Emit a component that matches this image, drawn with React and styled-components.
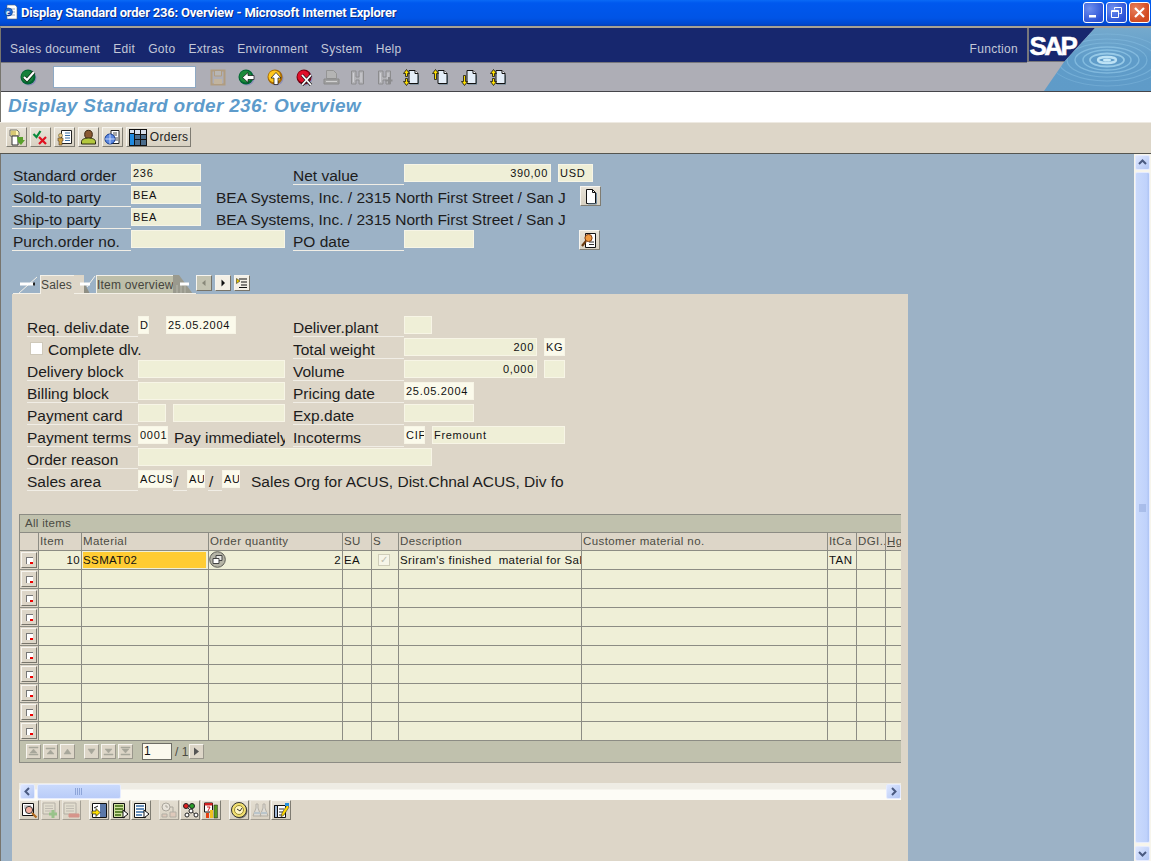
import React from "react";
import styled, { createGlobalStyle } from "styled-components";

const COLS = "19px 43px 127px 134px 29px 27px 183px 246px 29px 29px 16px";

const Global = createGlobalStyle`
  html, body { margin: 0; height: 100%; overflow: hidden; }
  body { font-family: "Liberation Sans", Arial, sans-serif; }
`;

// ---------- window chrome ----------
const Page = styled.div`
  width: 1151px;
  height: 861px;
  display: flex;
  flex-direction: column;
  position: relative;
  background: #9cb2c6;
  overflow: hidden;
`;

const TitleBar = styled.div`
  height: 26px;
  flex: none;
  display: flex;
  align-items: center;
  padding: 0 1px 2px 3px;
  box-sizing: border-box;
  background: linear-gradient(#0a6af6 0, #0058ee 3px, #0054e6 18px, #0048d0 24px, #0a3fb0 100%);
  color: #fff;
  font: bold 13px Roboto, "Liberation Sans", sans-serif;
  text-shadow: 1px 1px 0 #0a2a80;
`;

const TitleText = styled.span`
  margin-left: 2px;
  flex: 1;
  letter-spacing: -0.2px;
`;

const WinButton = styled.div`
  width: 19px;
  height: 19px;
  margin-left: 2px;
  border: 1px solid #fff;
  border-radius: 3px;
  display: flex;
  align-items: center;
  justify-content: center;
  background: ${(p) =>
    p.$close
      ? "radial-gradient(circle at 30% 30%, #e8805c, #d24a20 70%)"
      : "radial-gradient(circle at 30% 30%, #6f8fee, #2a52d6 75%)"};
`;

const Chrome = styled.div`
  flex: none;
  position: relative;
  background: #aeaeb6;
  border-top: 2px solid #a8a294;
  border-left: 1px solid #77756e;
`;

const MenuBar = styled.div`
  margin-right: 124px;
  background: #17276e;
  border-bottom: 1px solid #77777c;
  display: flex;
  align-items: center;
  gap: 13px;
  padding: 7px 9px 0;
  height: 27px;
  color: #c3c8d8;
  font-size: 12px;
  letter-spacing: 0.3px;
`;

const MenuSpacer = styled.span`
  flex: 1;
`;

const LogoBox = styled.svg`
  position: absolute;
  top: 0;
  right: 0;
  display: block;
`;

const MainTools = styled.div`
  height: 28px;
  border-bottom: 1px solid #45454a;
  display: flex;
  align-items: center;
  padding-left: 19px;
`;

const ToolIcon = styled.div`
  width: 17px;
  height: 17px;
  flex: none;
  margin-left: ${(p) => p.$ml || 0}px;
`;

const CommandField = styled.div`
  width: 141px;
  height: 20px;
  margin-left: 16px;
  background: #fff;
  border: 1px solid #8ea9c4;
  flex: none;
`;

const PageTitle = styled.div`
  flex: none;
  height: 30px;
  background: #fff;
  border-left: 1px solid #77756e;
  padding-left: 7px;
  color: #5d9bcb;
  font: italic bold 19px/28px "Liberation Sans", sans-serif;
  letter-spacing: 0.3px;
`;

const AppTools = styled.div`
  flex: none;
  height: 32px;
  box-sizing: border-box;
  background: #ddd6c8;
  border-top: 1px solid #eeeae2;
  border-bottom: 1px solid #55554f;
  display: flex;
  align-items: flex-start;
  padding: 4px 0 0 6px;
`;

const Btn = styled.div`
  width: ${(p) => p.$w || 21}px;
  height: 20px;
  margin-left: ${(p) => p.$ml || 0}px;
  flex: none;
  box-sizing: border-box;
  display: flex;
  align-items: center;
  justify-content: center;
  gap: 3px;
  background: linear-gradient(#e8e3d7, #d8d1c2);
  border: 1px solid;
  border-color: #f7f5ef #7f7c72 #7f7c72 #f7f5ef;
  font-size: 12px;
  letter-spacing: 0.3px;
  color: #222;
  opacity: ${(p) => (p.$off ? 0.6 : 1)};
`;

// ---------- body ----------
const Body = styled.div`
  flex: 1;
  display: flex;
  min-height: 0;
  border-left: 1px solid #77756e;
`;

const Content = styled.div`
  flex: 1;
  min-width: 0;
  padding: 10px 0 0 11px;
`;

const Row = styled.div`
  display: flex;
  height: 22px;
  align-items: flex-start;
  font-size: 15.5px;
  color: #111;
`;

const Label = styled.div`
  width: ${(p) => p.$w}px;
  height: 21px;
  margin-left: ${(p) => p.$ml || 0}px;
  flex: none;
  box-sizing: border-box;
  border-bottom: 1px solid #f1eee6;
  line-height: 23px;
  padding-left: ${(p) => p.$pad ?? 1}px;
  white-space: nowrap;
  color: #1c1c1c;
`;

const Field = styled.div`
  width: ${(p) => p.$w}px;
  height: 18px;
  margin-left: ${(p) => p.$ml || 0}px;
  flex: none;
  box-sizing: border-box;
  border: 1px solid #f7f5e6;
  background: ${(p) => (p.$lit ? "#fbfaeb" : "#efefd7")};
  font-size: 11px;
  line-height: 16px;
  letter-spacing: 0.7px;
  padding: 0 2px 0 1px;
  color: #111;
  overflow: hidden;
  white-space: nowrap;
  text-align: ${(p) => (p.$right ? "right" : "left")};
`;

const Plain = styled.div`
  width: ${(p) => p.$w}px;
  margin-left: ${(p) => p.$ml || 0}px;
  flex: none;
  height: 21px;
  line-height: 23px;
  overflow: hidden;
  white-space: nowrap;
  color: #1c1c1c;
`;

const Check = styled.div`
  width: 13px;
  height: 13px;
  margin: 4px 0 0 3px;
  flex: none;
  box-sizing: border-box;
  background: #fff;
  border: 1px solid #cfc9ba;
`;

const Tabs = styled.div`
  display: flex;
  align-items: flex-end;
  height: 20px;
  margin: 22px 0 0 1px;
  font-size: 12px;
  letter-spacing: 0.2px;
`;

const TabLabel = styled.div`
  height: 19px;
  box-sizing: border-box;
  width: ${(p) => p.$w}px;
  flex: none;
  border: 1px solid #f4f1e8;
  border-right: none;
  border-bottom: ${(p) => (p.$on ? "none" : "1px solid #f4f1e8")};
  line-height: 18px;
  color: #45453e;
  white-space: nowrap;
  background: ${(p) => (p.$on ? "#ddd6c8" : "#bdbea9")};
`;

const TabCorner = styled.svg`
  display: block;
  flex: none;
`;

const NavBtn = styled.div`
  width: 16px;
  height: 16px;
  flex: none;
  margin: 0 0 3px ${(p) => p.$ml ?? 3}px;
  box-sizing: border-box;
  background: ${(p) => (p.$off ? "#c3c3b2" : "#f4f0e6")};
  border: 1px solid;
  border-color: #f7f5ef #77746a #77746a #f7f5ef;
  display: flex;
  align-items: center;
  justify-content: center;
`;

const Panel = styled.div`
  width: 896px;
  height: 567px;
  background: #ddd6c8;
  padding: 22px 0 0 15px;
  box-sizing: border-box;
`;

const Table = styled.div`
  width: 882px;
  margin: 22px 0 0 -8px;
  box-sizing: border-box;
  border-top: 1px solid #8c8c84;
  border-left: 1px solid #8c8c84;
  overflow: hidden;
  font-size: 11.5px;
`;

const TableCaption = styled.div`
  height: 18px;
  background: #c0c1ad;
  border-bottom: 1px solid #8c8c84;
  line-height: 17px;
  padding-left: 5px;
  color: #4b4b43;
  letter-spacing: 0.3px;
  box-sizing: border-box;
`;

const TableRow = styled.div`
  display: grid;
  grid-template-columns: ${COLS};
  height: ${(p) => (p.$head ? 18 : 19)}px;
  line-height: ${(p) => (p.$head ? 17 : 19)}px;
  box-sizing: border-box;
  border-bottom: 1px solid #8c8c84;
  background: ${(p) => (p.$head ? "#ddd6c8" : "#efefd7")};
  color: ${(p) => (p.$head ? "#4b4b43" : "#111")};
`;

const Cell = styled.div`
  border-right: 1px solid #8c8c84;
  padding: 0 1px;
  overflow: hidden;
  white-space: pre;
  letter-spacing: 0.4px;
  position: relative;
  text-align: ${(p) => (p.$right ? "right" : "left")};
`;

const StubCell = styled.div`
  border-right: 1px solid #8c8c84;
  background: #ddd6c8;
  padding: 1px 0 0 1px;
`;

const RowMark = styled.div`
  width: 16px;
  height: 16px;
  box-sizing: border-box;
  background: #ddd6c8;
  border: 1px solid;
  border-color: #f7f5ef #77746a #77746a #f7f5ef;
  display: flex;
  align-items: center;
  justify-content: center;
`;

const Mark = styled.div`
  width: 6px;
  height: 6px;
  background: #fff;
  border: 1px solid #777;
  border-width: 1px 0 0 1px;
  position: relative;
  &::after {
    content: "";
    position: absolute;
    right: 0;
    bottom: 0;
    width: 3px;
    height: 2px;
    background: #e00;
  }
`;

const MatInput = styled.div`
  height: 16px;
  margin: 1px 1px 0 0;
  line-height: 16px;
  background: #ffcc33;
`;

const QtyIcon = styled.svg`
  position: absolute;
  left: 0;
  top: 0;
`;

const StatusBox = styled.div`
  width: 12px;
  height: 12px;
  margin: 3px 0 0 5px;
  box-sizing: border-box;
  border: 1px solid #cfcdb9;
  background: #f6f5e8;
  color: #bdbdae;
  font-size: 10px;
  line-height: 10px;
  text-align: center;
`;

const TableFooter = styled.div`
  height: 22px;
  background: #c0c1ad;
  border-bottom: 1px solid #8c8c84;
  display: flex;
  align-items: center;
  padding-left: 5px;
  box-sizing: border-box;
  font-size: 12px;
  color: #4b4b43;
`;

const PagerBtn = styled.div`
  width: 15px;
  height: 15px;
  flex: none;
  margin-left: ${(p) => p.$ml ?? 2}px;
  box-sizing: border-box;
  background: #ddd6c8;
  border: 1px solid;
  border-color: #f7f5ef #9a978c #9a978c #f7f5ef;
  display: flex;
  align-items: center;
  justify-content: center;
`;

const PagerField = styled.div`
  width: 30px;
  height: 17px;
  margin-left: 9px;
  box-sizing: border-box;
  background: #fbf9ee;
  border: 1px solid #6e6e66;
  line-height: 15px;
  padding-left: 1px;
  color: #111;
`;

const PagerCount = styled.span`
  margin: 0 3px 0 3px;
  width: 11px;
  flex: none;
  white-space: nowrap;
`;

const HScroll = styled.div`
  width: 882px;
  height: 17px;
  margin: 20px 0 0 -8px;
  display: flex;
  align-items: center;
  background: linear-gradient(#eeece4 0, #eeece4 6px, #fdfcf6 7px, #fdfcf6 100%);
`;

const ScrollBtn = styled.div`
  width: 15px;
  height: 15px;
  flex: none;
  margin-left: ${(p) => p.$ml || 0}px;
  box-sizing: border-box;
  border: 1px solid #e6ecff;
  border-radius: 2px;
  background: linear-gradient(135deg, #dfe8ff, #b2c6f4);
  display: flex;
  align-items: center;
  justify-content: center;
`;

const Thumb = styled.div`
  width: 84px;
  height: 15px;
  flex: none;
  margin-left: 2px;
  box-sizing: border-box;
  border: 1px solid #e6ecff;
  border-radius: 2px;
  background: linear-gradient(#cadafc, #b9ccf8);
  display: flex;
  align-items: center;
  justify-content: center;
`;

const ScrollFill = styled.div`
  flex: 1;
`;

const BottomTools = styled.div`
  display: flex;
  margin-left: -8px;
`;

const VScroll = styled.div`
  width: 17px;
  flex: none;
  display: flex;
  flex-direction: column;
  background: #f7f5ec;
  align-items: center;
  padding-top: 1px;
  gap: 1px;
`;

const VThumb = styled.div`
  width: 15px;
  flex: 1;
  margin: 1px 0 2px;
  box-sizing: border-box;
  border: 1px solid #e6ecff;
  border-radius: 2px;
  background: linear-gradient(90deg, #cadafc, #c0d2fb 80%, #aec4f4);
  display: flex;
  align-items: center;
  justify-content: center;
`;

// ---------- icons ----------
const Svg = ({ children, w = 17, h = 17, vb = "0 0 17 17", off }) => (
  <svg width={w} height={h} viewBox={vb} style={off ? { opacity: 0.5 } : undefined}>
    {children}
  </svg>
);

const Round = ({ fill, dark, children }) => (
  <Svg>
    <circle cx="9" cy="9" r="7.5" fill="#8d8fb8" />
    <circle cx="8" cy="8" r="7.5" fill={dark} />
    <circle cx="7.5" cy="7.5" r="6" fill={fill} />
    {children}
  </Svg>
);

const CheckIcon = () => (
  <Round fill="#17803a" dark="#063">
    <path d="M4 8l3 3 7-8" fill="none" stroke="#0b2b14" strokeWidth="3.6" />
    <path d="M4 8l3 3 7-8" fill="none" stroke="#fff" strokeWidth="2.2" />
  </Round>
);
const BackIcon = () => (
  <Round fill="#1c8a3a" dark="#063">
    <path d="M16 6.5H10V3.5L4.5 8.5 10 13.5V10.5h6z" fill="#fff" stroke="#111" strokeWidth=".7" />
  </Round>
);
const UpIcon = () => (
  <Round fill="#ffc81e" dark="#a86a00">
    <path d="M9 3.5L4 9h3v6.500h4V9h3z" fill="#fff" stroke="#111" strokeWidth=".7" />
  </Round>
);
const CancelIcon = () => (
  <Round fill="#e0102a" dark="#7a0010">
    <path d="M6 6l9 10M15 6L6 16" stroke="#222" strokeWidth="3.2" />
    <path d="M6 6l9 10M15 6L6 16" stroke="#fff" strokeWidth="1.8" />
  </Round>
);
const SaveIcon = () => (
  <Svg>
    <path d="M1.5 1.5h13v14h-13z" fill="#aeaeb6" stroke="#b09c80" strokeWidth="2" />
    <path d="M4.5 2v5h7V2" fill="#b8b6b4" stroke="#b09c80" />
    <path d="M4 10h8v5H4z" fill="#c2b49e" />
  </Svg>
);
const PrintIcon = () => (
  <Svg>
    <path d="M3.5 1.5h7l3 3v5h-10z" fill="#b4b4b4" stroke="#949494" />
    <path d="M1 10h15v5H1z" fill="#a0a0a0" stroke="#8a8a8a" />
    <path d="M3 12.5h11" stroke="#d0d0d0" />
  </Svg>
);
const FindIcon = ({ plus }) => (
  <Svg>
    <path d="M2.5 2h4.500v6h3V2h4.500v13h-4.500v-4H7v4H2.5z" fill="#b4b4b8" stroke="#8c8c8e" />
    <path d="M4.5 4v9M12 4v9" stroke="#d0d0d4" />
    {plus && <path d="M13 8v7M9.500 11.500h7" stroke="#8c8c8e" strokeWidth="2" />}
  </Svg>
);
const PageArrows = ({ up, down }) => (
  <Svg>
    <path d="M7 3.5h6l3 3v9H7z" fill="#5f7c8c" />
    <path d="M6 1.5h6l3 3v10H6z" fill="#e4eef8" stroke="#111" />
    <path d="M12 1.5v3h3" fill="#fff" stroke="#111" />
    {up && <path d={`M3.5 0.5L0.5 4.5h2v${up === 2 ? 6 : 3}h2V4.5h2z`} fill="#ffe000" stroke="#111" strokeWidth=".8" />}
    {down && <path d={`M3.5 16.5L0.5 12.5h2V${down === 2 ? 6.5 : 9.5}h2v${down === 2 ? 6 : 3}h2z`} fill="#ffe000" stroke="#111" strokeWidth=".8" />}
  </Svg>
);

const DocArrow = () => (
  <Svg>
    <path d="M2 1h7l2 2v4H2z" fill="#fff6b8" stroke="#555" strokeWidth=".8" />
    <path d="M3 3h5M3 5h5" stroke="#b09a30" />
    <path d="M4 7h6v9H4z" fill="#fff" stroke="#333" />
    <path d="M9 8h6v3h2l-4 5-3-3z" fill="#5aa02c" />
  </Svg>
);
const CheckCross = () => (
  <Svg>
    <path d="M1.5 5l3 3 4-6" fill="none" stroke="#0a8a3c" strokeWidth="2.2" />
    <path d="M7 8l7 7M14 8l-7 7" stroke="#e01020" strokeWidth="2.2" />
  </Svg>
);
const PersonDoc = () => (
  <Svg>
    <path d="M5.5 1.5h10v13h-10z" fill="#fff" stroke="#222" />
    <path d="M9 4h5M9 6.500h5M9 9h5M9 11.500h5" stroke="#3a6ea5" />
    <circle cx="4.5" cy="6.5" r="2" fill="#e8c080" stroke="#663" strokeWidth=".6" />
    <path d="M2 9h5v3H6v4H3v-4H2z" fill="#d0a040" stroke="#543" strokeWidth=".6" />
  </Svg>
);
const Bust = () => (
  <Svg>
    <ellipse cx="8.5" cy="5.5" rx="3.8" ry="4.2" fill="#8a5a34" stroke="#3a2410" />
    <path d="M1.5 15v-2.500c0-2 3-3.500 7-3.500s7 1.500 7 3.500V15z" fill="#b4c83c" stroke="#2a2a10" />
  </Svg>
);
const GlobeDoc = () => (
  <Svg>
    <path d="M7 1.5h8v13H7z" fill="#fff" stroke="#222" />
    <path d="M9 4h4M9 6h4M10 9h4M10 11h4" stroke="#222" strokeWidth=".8" />
    <circle cx="6" cy="10" r="5" fill="#5c88e0" stroke="#123a90" />
    <path d="M6 5v10M1 10h10" stroke="#dfeaff" strokeWidth=".8" />
  </Svg>
);
const GridIcon = () => (
  <Svg w={18} h={17} vb="0 0 18 17">
    <path d="M0 0h18v17H0z" fill="#111" />
    <path d="M1 5h4v11H1z" fill="#1f8ae0" />
    <path d="M6 1h5v4H6zM12 1h5v4h-5zM1 1h4v3H1z" fill="#d8e0ec" />
    <path d="M6 6h5v10H6zM12 6h5v10h-5z" fill="#4a6c8c" />
    <path d="M6 10.5h11" stroke="#111" />
  </Svg>
);
const DocIcon = () => (
  <Svg>
    <path d="M4.5 1.5h6l3 3v11h-9z" fill="#fff" stroke="#111" />
    <path d="M10.5 1.5v3h3" fill="none" stroke="#111" />
    <path d="M14.5 5v11H6" fill="none" stroke="#6f8aa0" />
  </Svg>
);
const DocLens = () => (
  <Svg>
    <path d="M4.5 1.5h10v14h-10z" fill="#fff" stroke="#111" />
    <path d="M8 10h5M8 12.500h5" stroke="#333" />
    <circle cx="7.5" cy="6" r="3.6" fill="#f09a40" stroke="#7a3a10" />
    <path d="M5 9l-4 5" stroke="#6a3a10" strokeWidth="2.2" />
  </Svg>
);
const Lens = () => (
  <Svg>
    <path d="M1.5 1.5h11v12h-11z" fill="#fff" stroke="#111" />
    <path d="M3 4h7M3 6h4" stroke="#999" />
    <circle cx="8" cy="8" r="3.6" fill="#f2b0a0" stroke="#333" />
    <path d="M11 11l4.500 4.500" stroke="#b06a20" strokeWidth="2.2" />
  </Svg>
);
const BlockPlus = ({ minus }) => (
  <Svg off>
    <path d="M1 1h12v11H1z" fill="#e8e8d8" stroke="#555" />
    <path d="M3 4h8M3 6.500h8M3 9h8" stroke="#777" />
    <path d={minus ? "M6 12h10v3H6z" : "M11 8v8M7 12h8"} fill="#c00" stroke={minus ? "#c00" : "#090"} strokeWidth={minus ? 1 : 3} />
  </Svg>
);
const ColsArrow = () => (
  <Svg>
    <path d="M1.5 1.5h14v14h-14z" fill="#fff" stroke="#111" />
    <path d="M9 2h6v13H9z" fill="#5b78a8" />
    <path d="M1 9h4V6.500l4 4-4 4V12H1z" fill="#ffe000" stroke="#111" strokeWidth=".7" />
    <path d="M7 4L3 6" stroke="#111" />
  </Svg>
);
const GreenList = ({ blue }) => (
  <Svg>
    <path d="M1.5 1.5h11v14h-11z" fill={blue ? "#fff" : "#cfe0a0"} stroke="#111" />
    <path d="M3 4h8M3 7h8M3 10h8M3 13h6" stroke={blue ? "#3a6ea5" : "#3c6a10"} strokeWidth="1.6" />
    <path d="M11 8l5 4-5 4z" fill="#fff" stroke="#111" />
  </Svg>
);
const ClockTree = () => (
  <Svg off>
    <circle cx="5" cy="5" r="4" fill="#fff" stroke="#333" />
    <path d="M5 3v2h2M9 5h3v5" fill="none" stroke="#333" />
    <path d="M9 10h6v5H9zM1 12h5v3H1z" fill="#e6b0a0" stroke="#555" />
  </Svg>
);
const Network = () => (
  <Svg>
    <path d="M4 4l5 5M9 9l-4 4M9 9l5 4" stroke="#333" />
    <circle cx="4" cy="4" r="2.5" fill="#e02020" stroke="#222" />
    <circle cx="10" cy="4" r="2.5" fill="#2aa02a" stroke="#222" />
    <circle cx="9" cy="9" r="2" fill="#fff" stroke="#222" />
    <circle cx="5" cy="13" r="2" fill="#fff" stroke="#222" />
    <circle cx="14" cy="13" r="2" fill="#fff" stroke="#222" />
  </Svg>
);
const CalBars = () => (
  <Svg>
    <path d="M1.5 1h8v9h-8z" fill="#fff" stroke="#111" />
    <path d="M1.5 1h8v2.500h-8z" fill="#d02020" />
    <path d="M4 5h3l-2 4" fill="none" stroke="#d02020" />
    <path d="M3 11h3v5H3z" fill="#e84010" />
    <path d="M7 8h3v8H7z" fill="#f0c020" />
    <path d="M11 3h3.500v13H11z" fill="#5a9a20" stroke="#222" strokeWidth=".5" />
  </Svg>
);
const Disc = () => (
  <Svg>
    <circle cx="9" cy="9" r="7.5" fill="#7a7a72" />
    <circle cx="8" cy="8" r="7.5" fill="#f2e070" stroke="#333" />
    <circle cx="8" cy="8" r="4.5" fill="#fff6c0" stroke="#9a8a30" />
    <path d="M6 7l3 2 2-3" fill="none" stroke="#333" />
  </Svg>
);
const Flasks = () => (
  <Svg off>
    <path d="M4 2h2v4l3 8H1l3-8zM11 2h2v4l3 8H8l3-8z" fill="#dfe8f4" stroke="#555" />
    <path d="M2 11h6M9 11h6" stroke="#6aa0d0" strokeWidth="2" />
  </Svg>
);
const ListPen = () => (
  <Svg>
    <path d="M1.5 3.5h11v12h-11z" fill="#fff" stroke="#111" />
    <path d="M1.5 3.5h3v12h-3z" fill="#a0b8d8" stroke="#111" />
    <path d="M6 7h5M6 10h4M6 13h3" stroke="#333" />
    <path d="M14 3l2 2-5 8-3 2 1-4z" fill="#ffd800" stroke="#333" strokeWidth=".6" />
    <path d="M12 1h4v3h-4z" fill="#2090e0" />
  </Svg>
);

const Chevron = ({ d }) => (
  <svg width="9" height="9" viewBox="0 0 9 9">
    <path d={d} fill="none" stroke="#4a5a80" strokeWidth="2" />
  </svg>
);

const Pager = ({ d }) => (
  <svg width="11" height="11" viewBox="0 0 11 11">
    <path d={d} fill="#a7a69a" stroke="#a7a69a" strokeWidth=".5" />
  </svg>
);

const GripLines = () => (
  <svg width="10" height="7" viewBox="0 0 10 7">
    <path d="M1.5 0v7M3.5 0v7M5.5 0v7M7.5 0v7" stroke="#8ea5d8" />
  </svg>
);

const RIPPLES = [
  [9, 3, "#c8eafa", 2.4, 0.9],
  [17, 6.5, "#a8d8f2", 1.8, 0.75],
  [24, 10, "#9ad0ee", 1.5, 0.6],
  [32, 13, "#9ad0ee", 1.4, 0.55],
  [40, 17, "#8cc4e6", 1.2, 0.5],
  [49, 21, "#8cc4e6", 1.1, 0.45],
  [58, 26, "#8cc4e6", 1, 0.35],
];

const Logo = () => (
  <LogoBox width="124" height="63" viewBox="0 0 124 63">
    <defs>
      <linearGradient id="water" x1="0" y1="0" x2="0" y2="1">
        <stop offset="0" stopColor="#74a9cd" />
        <stop offset="0.5" stopColor="#5f9cc9" />
        <stop offset="1" stopColor="#5f9bc8" />
      </linearGradient>
      <clipPath id="waterClip">
        <polygon points="68,0 124,0 124,63 17,63 37,34" />
      </clipPath>
      <filter id="soft">
        <feGaussianBlur stdDeviation="0.6" />
      </filter>
    </defs>
    <rect x="0" y="0" width="2" height="34" fill="#77777c" />
    <polygon points="2,0 68,0 37,34 2,34" fill="#17276e" />
    <rect x="2" y="33" width="36" height="1" fill="#77777c" />
    <polygon points="68,0 124,0 124,63 17,63 37,34" fill="url(#water)" />
    <g clipPath="url(#waterClip)">
      <g fill="none" filter="url(#soft)">
        {RIPPLES.map(([rx, ry, c, sw, o]) => (
          <ellipse key={rx} cx="80" cy="32" rx={rx} ry={ry} stroke={c} strokeWidth={sw} opacity={o} />
        ))}
        <ellipse cx="80" cy="32" rx="4" ry="1.5" fill="#c8eafa" />
      </g>
    </g>
    <text x="2.5" y="27" fill="#fff" stroke="#fff" strokeWidth="0.5" fontFamily="Liberation Sans" fontWeight="bold" fontSize="26" letterSpacing="-2.5">SAP</text>
  </LogoBox>
);

const IeIcon = () => (
  <svg width="16" height="16" viewBox="0 0 16 16" style={{ flex: "none" }}>
    <path d="M4 1h8l2 2v12H4z" fill="#fff" stroke="#567" strokeWidth=".6" />
    <path d="M6 5h6M6 8h6M6 11h6" stroke="#9ab" />
    <circle cx="5.5" cy="8" r="4" fill="#1f6fd8" stroke="#0a3a90" strokeWidth=".6" />
    <text x="3" y="11" fontSize="8" fontWeight="bold" fill="#fff" fontFamily="Liberation Serif">e</text>
  </svg>
);

// the three slanted pieces of the tab strip
const CornerActive = () => (
  <TabCorner width="27" height="19" viewBox="0 0 27 19">
    <path d="M6 18L24 2" stroke="#f4f1e8" />
    <path d="M7 7.5h14V10.5H7z" fill="#fff" />
    <path d="M20 7.5h2V10.5h-2z" fill="#222" />
    <path d="M0 18.5h27" stroke="#f4f1e8" />
  </TabCorner>
);

const CornerMiddle = () => (
  <TabCorner width="22" height="19" viewBox="0 0 22 19">
    <path d="M0 0h10v19H0z" fill="#ddd6c8" />
    <polygon points="10,7 16,19 10,19" fill="#8f8f84" />
    <path d="M13 12L21 1" stroke="#f4f1e8" />
    <path d="M6 7.5h10V10.5H6z" fill="#fff" />
    <path d="M0 18.5h22" stroke="#f4f1e8" />
  </TabCorner>
);

const CornerEnd = () => (
  <TabCorner width="23" height="19" viewBox="0 0 23 19">
    <polygon points="0,0 6,0 20,19 0,19" fill="#9a9a8e" />
    <path d="M4 10v9M8 10v9M12 11v8" stroke="#b8b8ac" />
    <path d="M7 7.5h9V10.5H7z" fill="#fff" />
    <path d="M0 18.5h23" stroke="#f4f1e8" />
  </TabCorner>
);

// ---------- page ----------
const App = () => {
  const rows = Array.from({ length: 10 }, (_, i) => i);
  return (
    <Page>
      <Global />
      <TitleBar>
        <IeIcon />
        <TitleText>Display Standard order 236: Overview - Microsoft Internet Explorer</TitleText>
        <WinButton>
          <svg width="13" height="13" viewBox="0 0 13 13"><path d="M2 9h7v2.5H2z" fill="#fff" /></svg>
        </WinButton>
        <WinButton>
          <svg width="13" height="13" viewBox="0 0 13 13"><path d="M4.5 3.5V1.5h7v6h-2M1.5 4.5h7v7h-7zM1.5 5.5h7" fill="none" stroke="#fff" /></svg>
        </WinButton>
        <WinButton $close>
          <svg width="13" height="13" viewBox="0 0 13 13"><path d="M2 2l9 9M11 2l-9 9" stroke="#fff" strokeWidth="2.2" /></svg>
        </WinButton>
      </TitleBar>

      <Chrome>
        <MenuBar>
          <span>Sales document</span>
          <span>Edit</span>
          <span>Goto</span>
          <span>Extras</span>
          <span>Environment</span>
          <span>System</span>
          <span>Help</span>
          <MenuSpacer />
          <span>Function</span>
        </MenuBar>
        <MainTools>
          <ToolIcon><CheckIcon /></ToolIcon>
          <CommandField />
          <ToolIcon $ml={14}><SaveIcon /></ToolIcon>
          <ToolIcon $ml={11}><BackIcon /></ToolIcon>
          <ToolIcon $ml={12}><UpIcon /></ToolIcon>
          <ToolIcon $ml={12}><CancelIcon /></ToolIcon>
          <ToolIcon $ml={10}><PrintIcon /></ToolIcon>
          <ToolIcon $ml={9}><FindIcon /></ToolIcon>
          <ToolIcon $ml={10}><FindIcon plus /></ToolIcon>
          <ToolIcon $ml={10}><PageArrows up={1} down={1} /></ToolIcon>
          <ToolIcon $ml={12}><PageArrows up={2} /></ToolIcon>
          <ToolIcon $ml={12}><PageArrows down={2} /></ToolIcon>
          <ToolIcon $ml={12}><PageArrows up={1} down={1} /></ToolIcon>
        </MainTools>
        <Logo />
      </Chrome>

      <PageTitle>Display Standard order 236: Overview</PageTitle>

      <AppTools>
        <Btn><DocArrow /></Btn>
        <Btn $ml={3}><CheckCross /></Btn>
        <Btn $ml={3}><PersonDoc /></Btn>
        <Btn $ml={3}><Bust /></Btn>
        <Btn $ml={3}><GlobeDoc /></Btn>
        <Btn $ml={3} $w={65}><GridIcon />Orders</Btn>
      </AppTools>

      <Body>
        <Content>
          <Row>
            <Label $w={119}>Standard order</Label>
            <Field $w={70}>236</Field>
            <Label $w={111} $ml={92} $pad={0}>Net value</Label>
            <Field $w={147} $right>390,00</Field>
            <Field $w={35} $ml={7}>USD</Field>
          </Row>
          <Row>
            <Label $w={119}>Sold-to party</Label>
            <Field $w={70}>BEA</Field>
            <Plain $w={350} $ml={15}>BEA Systems, Inc. / 2315 North First Street / San J</Plain>
            <Btn $ml={14}><DocIcon /></Btn>
          </Row>
          <Row>
            <Label $w={119}>Ship-to party</Label>
            <Field $w={70}>BEA</Field>
            <Plain $w={350} $ml={15}>BEA Systems, Inc. / 2315 North First Street / San J</Plain>
          </Row>
          <Row>
            <Label $w={119}>Purch.order no.</Label>
            <Field $w={154} />
            <Label $w={111} $ml={8} $pad={0}>PO date</Label>
            <Field $w={70} />
            <Btn $ml={105}><DocLens /></Btn>
          </Row>

          <Tabs>
            <CornerActive />
            <TabLabel $on $w={34}>Sales</TabLabel>
            <CornerMiddle />
            <TabLabel $w={77}>Item overview</TabLabel>
            <CornerEnd />
            <NavBtn $off $ml={0}>
              <svg width="8" height="8" viewBox="0 0 8 8"><path d="M5.5 1L2 4l3.5 3z" fill="#88887a" /></svg>
            </NavBtn>
            <NavBtn>
              <svg width="8" height="8" viewBox="0 0 8 8"><path d="M2.5 0.5L6 4 2.5 7.5z" fill="#111" /></svg>
            </NavBtn>
            <NavBtn>
              <svg width="12" height="12" viewBox="0 0 12 12"><path d="M3 2h8M5 5h6M5 8h6M3 10.5h8" stroke="#111" /><path d="M0.5 1.5L4 4 0.5 6.5z" fill="#e8c800" stroke="#111" strokeWidth=".5" /></svg>
            </NavBtn>
          </Tabs>

          <Panel>
            <Row>
              <Label $w={111} $pad={0}>Req. deliv.date</Label>
              <Field $w={11} $lit>D</Field>
              <Field $w={70} $ml={17} $lit>25.05.2004</Field>
              <Label $w={111} $ml={57} $pad={0}>Deliver.plant</Label>
              <Field $w={28} />
            </Row>
            <Row>
              <Check />
              <Plain $w={111} $ml={5}>Complete dlv.</Plain>
              <Label $w={111} $ml={134} $pad={0}>Total weight</Label>
              <Field $w={133} $right>200</Field>
              <Field $w={21} $ml={7} $lit>KG</Field>
            </Row>
            <Row>
              <Label $w={111} $pad={0}>Delivery block</Label>
              <Field $w={147} />
              <Label $w={111} $ml={8} $pad={0}>Volume</Label>
              <Field $w={133} $right>0,000</Field>
              <Field $w={21} $ml={7} />
            </Row>
            <Row>
              <Label $w={111} $pad={0}>Billing block</Label>
              <Field $w={147} />
              <Label $w={111} $ml={8} $pad={0}>Pricing date</Label>
              <Field $w={70} $lit>25.05.2004</Field>
            </Row>
            <Row>
              <Label $w={111} $pad={0}>Payment card</Label>
              <Field $w={28} />
              <Field $w={112} $ml={7} />
              <Label $w={111} $ml={8} $pad={0}>Exp.date</Label>
              <Field $w={70} />
            </Row>
            <Row>
              <Label $w={111} $pad={0}>Payment terms</Label>
              <Field $w={30} $lit>0001</Field>
              <Plain $w={111} $ml={6}>Pay immediately</Plain>
              <Label $w={111} $ml={8} $pad={0}>Incoterms</Label>
              <Field $w={21} $lit>CIF</Field>
              <Field $w={133} $ml={7}>Fremount</Field>
            </Row>
            <Row>
              <Label $w={111} $pad={0}>Order reason</Label>
              <Field $w={294} />
            </Row>
            <Row>
              <Label $w={111} $pad={0}>Sales area</Label>
              <Field $w={35} $lit>ACUS</Field>
              <Label $w={14}>/</Label>
              <Field $w={18} $lit>AU</Field>
              <Label $w={14} $ml={3}>/</Label>
              <Field $w={18} $lit>AU</Field>
              <Plain $w={315} $ml={11}>Sales Org for ACUS, Dist.Chnal ACUS, Div fo</Plain>
            </Row>

            <Table>
              <TableCaption>All items</TableCaption>
              <TableRow $head>
                <Cell />
                <Cell>Item</Cell>
                <Cell>Material</Cell>
                <Cell>Order quantity</Cell>
                <Cell>SU</Cell>
                <Cell>S</Cell>
                <Cell>Description</Cell>
                <Cell>Customer material no.</Cell>
                <Cell>ItCa</Cell>
                <Cell>DGI..</Cell>
                <Cell><u>Hg</u></Cell>
              </TableRow>
              {rows.map((i) => (
                <TableRow key={i}>
                  <StubCell>
                    <RowMark><Mark /></RowMark>
                  </StubCell>
                  <Cell $right>{i === 0 ? "10" : ""}</Cell>
                  <Cell>{i === 0 && <MatInput>SSMAT02</MatInput>}</Cell>
                  <Cell $right>
                    {i === 0 && (
                      <QtyIcon width="17" height="17" viewBox="0 0 17 17">
                        <circle cx="8.5" cy="8.5" r="7.8" fill="#b5b4a6" stroke="#5e5e56" />
                        <path d="M7 4.5h6v5H7z" fill="#e8e8e4" stroke="#444" />
                        <path d="M4 7.5h6v5H4z" fill="#fff" stroke="#444" />
                      </QtyIcon>
                    )}
                    {i === 0 ? "2" : ""}
                  </Cell>
                  <Cell>{i === 0 ? "EA" : ""}</Cell>
                  <Cell>{i === 0 && <StatusBox>✓</StatusBox>}</Cell>
                  <Cell>{i === 0 ? "Sriram's finished  material for Sal" : ""}</Cell>
                  <Cell />
                  <Cell>{i === 0 ? "TAN" : ""}</Cell>
                  <Cell />
                  <Cell />
                </TableRow>
              ))}
              <TableFooter>
                <PagerBtn $ml={1}><Pager d="M1 1h9v1H1zM1 8h9v1H1zM5.5 3L2 7h7z" /></PagerBtn>
                <PagerBtn><Pager d="M1 2h9v1H1zM5.5 4L2 8h7z" /></PagerBtn>
                <PagerBtn><Pager d="M5.5 3L2 8h7z" /></PagerBtn>
                <PagerBtn $ml={9}><Pager d="M5.5 8L2 3h7z" /></PagerBtn>
                <PagerBtn><Pager d="M1 8h9v1H1zM5.5 7L2 3h7z" /></PagerBtn>
                <PagerBtn><Pager d="M1 1h9v1H1zM1 8h9v1H1zM5.5 7L2 3h7z" /></PagerBtn>
                <PagerField>1</PagerField>
                <PagerCount>/ 1</PagerCount>
                <PagerBtn $ml={0}>
                  <svg width="9" height="9" viewBox="0 0 9 9"><path d="M2 0.5L7 4.5 2 8.5z" fill="#555" /></svg>
                </PagerBtn>
              </TableFooter>
            </Table>

            <HScroll>
              <ScrollBtn $ml={1}><Chevron d="M6 1L2.5 4.5 6 8" /></ScrollBtn>
              <Thumb><GripLines /></Thumb>
              <ScrollFill />
              <ScrollBtn><Chevron d="M3 1l3.5 3.5L3 8" /></ScrollBtn>
            </HScroll>

            <BottomTools>
              <Btn $w={20}><Lens /></Btn>
              <Btn $w={19} $ml={2} $off><BlockPlus /></Btn>
              <Btn $w={19} $ml={2} $off><BlockPlus minus /></Btn>
              <Btn $w={20} $ml={8}><ColsArrow /></Btn>
              <Btn $w={20} $ml={1}><GreenList /></Btn>
              <Btn $w={20} $ml={1}><GreenList blue /></Btn>
              <Btn $w={20} $ml={8} $off><ClockTree /></Btn>
              <Btn $w={20} $ml={1}><Network /></Btn>
              <Btn $w={20} $ml={1}><CalBars /></Btn>
              <Btn $w={20} $ml={8}><Disc /></Btn>
              <Btn $w={20} $ml={1} $off><Flasks /></Btn>
              <Btn $w={20} $ml={1}><ListPen /></Btn>
            </BottomTools>
          </Panel>
        </Content>
        <VScroll>
          <ScrollBtn><Chevron d="M1 6l3.5-3.5L8 6" /></ScrollBtn>
          <VThumb>
            <svg width="9" height="8" viewBox="0 0 9 8"><path d="M1 1h7M1 3h7M1 5h7M1 7h7" stroke="#8ea5d8" /></svg>
          </VThumb>
          <ScrollBtn><Chevron d="M1 3l3.5 3.5L8 3" /></ScrollBtn>
        </VScroll>
      </Body>
    </Page>
  );
};

export default App;
